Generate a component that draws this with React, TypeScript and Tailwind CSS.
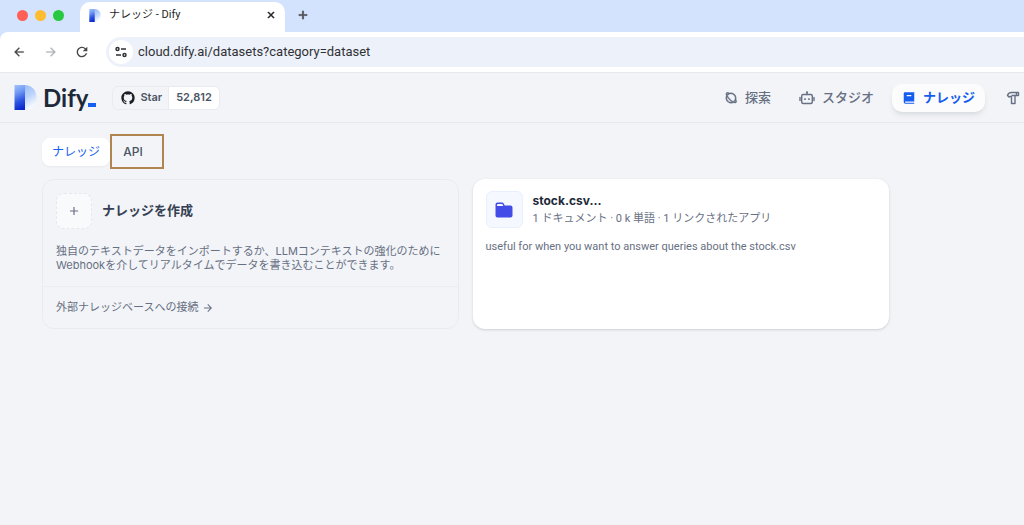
import React, { useId } from 'react';
import clsx from 'clsx';
import {
  RiAddLine,
  RiArrowLeftLine,
  RiArrowRightLine,
  RiBook2Fill,
  RiCloseLine,
  RiGithubFill,
  RiPlanetLine,
} from 'react-icons/ri';
import { MdRefresh } from 'react-icons/md';

interface NavItem {
  label: string;
  icon: React.ReactNode;
  active?: boolean;
}

function DifyMark({ className }: { className?: string }) {
  const id = useId();
  return (
    <svg viewBox="0 0 22 25" className={className} aria-hidden="true">
      <defs>
        <linearGradient id={`${id}a`} x1="0.3" y1="0" x2="0.5" y2="1">
          <stop offset="0" stopColor="#9bbcf9" />
          <stop offset="0.3" stopColor="#6f98f3" />
          <stop offset="0.65" stopColor="#2f56e2" />
          <stop offset="1" stopColor="#0a27cc" />
        </linearGradient>
        <linearGradient id={`${id}b`} x1="0" y1="0" x2="0.3" y2="1">
          <stop offset="0" stopColor="#9bbcf9" />
          <stop offset="0.5" stopColor="#bcd4fb" />
          <stop offset="1" stopColor="#fafcff" />
        </linearGradient>
      </defs>
      <path d="M10 0c7.200 0 12 5 12 12.500S17.200 25 10 25z" fill={`url(#${id}b)`} />
      <path d="M0 0h10.500v25H0z" fill={`url(#${id}a)`} />
    </svg>
  );
}

function TuneIcon() {
  return (
    <svg viewBox="0 0 14 14" className="size-3.5" fill="none" stroke="#303134" strokeWidth="1.500">
      <circle cx="3.500" cy="4" r="1.500" />
      <path d="M7 4h5M2 10h5" />
      <circle cx="10.500" cy="10" r="1.500" />
    </svg>
  );
}

function RobotIcon() {
  return (
    <svg viewBox="0 0 16 16" className="size-4" fill="none" stroke="currentColor" strokeWidth="1.400">
      <rect x="2.700" y="4.500" width="10.600" height="9" rx="1.500" />
      <path d="M8 4.500V2.500M1 7.500v3M15 7.500v3" strokeLinecap="round" />
      <circle cx="8" cy="2.200" r="1" fill="currentColor" stroke="none" />
      <path d="M6 8.200v1.700M10 8.200v1.700" strokeWidth="1.600" />
    </svg>
  );
}

function HammerIcon() {
  return (
    <svg
      viewBox="0 0 14 14"
      className="size-3.5"
      fill="none"
      stroke="currentColor"
      strokeWidth="1.400"
      strokeLinejoin="round"
    >
      <path d="M1.500 4.500C2 2.500 3.300 1.500 5.500 1.500h7v3h-3.500v8H5.500v-7H4L3 6z" />
      <path d="M5.500 4.500H9M10.500 1.500v3" />
    </svg>
  );
}

function FolderIcon() {
  return (
    <svg viewBox="0 0 18 16" className="h-4 w-[18px]" aria-hidden="true">
      <path
        d="M.5 2.500A2 2 0 0 1 2.500.5h4.600c.7 0 1.300.3 1.600.9l1 2.100h5.800a2 2 0 0 1 2 2v8a2 2 0 0 1-2 2h-13a2 2 0 0 1-2-2z"
        fill="#444ce7"
      />
      <path d="M2 4V2.600c0-.4.300-.7.700-.7h4.100c.3 0 .5.100.7.400L8.300 4z" fill="#f5f8ff" />
    </svg>
  );
}

const navItems: NavItem[] = [
  { label: '探索', icon: <RiPlanetLine className="size-3.5" strokeWidth="0.5" /> },
  { label: 'スタジオ', icon: <RobotIcon /> },
  { label: 'ナレッジ', icon: <RiBook2Fill className="size-3.5" />, active: true },
];

function TabStrip() {
  return (
    <div className="flex h-8 bg-[#d3e3fd] pt-0.5">
      <div className="flex w-20 shrink-0 items-center justify-end gap-[7px] pr-4 pb-1">
        <span className="size-[11px] rounded-full bg-[#ff5f57]" />
        <span className="size-[11px] rounded-full bg-[#febc2e]" />
        <span className="size-[11px] rounded-full bg-[#28c840]" />
      </div>
      <div className="flex w-[205px] items-center rounded-t-[10px] bg-white pr-2 pb-1 pl-[9px]">
        <DifyMark className="h-[13px] w-3" />
        <span className="ml-2 font-['Roboto','Noto_Sans_CJK_JP',sans-serif] text-[11px] text-[#1f1f1f]">
          ナレッジ - Dify
        </span>
        <button aria-label="Close tab" className="ml-auto text-[#1f1f1f]">
          <RiCloseLine className="size-3" strokeWidth="1" />
        </button>
      </div>
      <button aria-label="New tab" className="ml-[11px] pb-1 text-[#474747]">
        <RiAddLine className="size-3.5" strokeWidth="1" />
      </button>
    </div>
  );
}

function Toolbar() {
  return (
    <div className="bg-[#d3e3fd]">
      <div className="flex h-10 items-center rounded-tl-lg bg-white pl-3">
        <button aria-label="Back" className="text-[#474747]">
          <RiArrowLeftLine className="size-3.5" strokeWidth="0.5" />
        </button>
        <button aria-label="Forward" className="ml-[18px] text-[#b0b3b8]">
          <RiArrowRightLine className="size-3.5" strokeWidth="0.5" />
        </button>
        <button aria-label="Reload" className="ml-4 text-[#474747]">
          <MdRefresh className="size-4" />
        </button>
        <div className="ml-4 flex h-[30px] flex-1 items-center rounded-l-full bg-[#edf1fa] pl-[3px]">
          <button
            aria-label="Site information"
            className="flex size-6 items-center justify-center rounded-full bg-white"
          >
            <TuneIcon />
          </button>
          <input
            aria-label="Address"
            readOnly
            value="cloud.dify.ai/datasets?category=dataset"
            className="ml-[5px] flex-1 bg-transparent font-['Roboto',sans-serif] text-[13px] text-[#303134] outline-none"
          />
        </div>
      </div>
    </div>
  );
}

function Header() {
  return (
    <header className="flex h-[51px] items-center border-y border-[#e6e8ed] pl-3.5">
      <a href="#" aria-label="Dify" className="flex items-center">
        <DifyMark className="h-[25px] w-[23px]" />
        <span className="ml-1.5 flex items-end font-['Lato'] text-[24px] leading-6 font-bold text-[#1d2939]">
          Dify
          <span className="mb-[3px] h-1 w-2 bg-[#155eef]" />
        </span>
      </a>
      <a
        href="#"
        className="ml-4 flex h-6 overflow-hidden rounded-md border border-[#e9ebf0] text-[11px] font-semibold text-[#495464]"
      >
        <span className="flex items-center gap-1 pr-1.5 pl-[7px]">
          <RiGithubFill className="size-4 text-[#1b1f24]" />
          Star
        </span>
        <span className="flex items-center border-l border-[#e9ebf0] bg-white px-[7px]">52,812</span>
      </a>
      <nav className="ml-auto flex items-center gap-2">
        {navItems.map((item) => (
          <a
            key={item.label}
            href="#"
            className={clsx(
              'flex h-7 items-center gap-[7px] rounded-[10px] px-2.5 text-[13px]',
              item.active
                ? 'bg-[#fcfcfd] font-bold text-[#155eef] shadow-md shadow-[#10182814]'
                : 'font-medium text-[#676f83]'
            )}
          >
            {item.icon}
            {item.label}
          </a>
        ))}
        <a href="#" aria-label="ツール" className="pr-1 pl-[13px] text-[#676f83]">
          <HammerIcon />
        </a>
      </nav>
    </header>
  );
}

function CreateCard() {
  return (
    <article className="flex flex-col rounded-xl border border-[#e9ebf0]">
      <div className="flex h-[106px] flex-col px-[13px] pt-[13px]">
        <a href="#" className="flex items-center gap-2.5 text-[13px] font-bold text-[#354052]">
          <span className="flex size-9 items-center justify-center rounded-lg border border-dashed border-[#e4e7ec] bg-[#f9fafb]">
            <RiAddLine className="size-3.5 text-[#676f83]" />
          </span>
          ナレッジを作成
        </a>
        <p className="mt-[15px] text-[11px] leading-3.5 text-[#676f83]">
          独自のテキストデータをインポートするか、LLMコンテキストの強化のために
          <br />
          Webhookを介してリアルタイムでデータを書き込むことができます。
        </p>
      </div>
      <a
        href="#"
        className="flex flex-1 items-center gap-1 border-t border-[#ebedf1] px-[13px] text-[11px] text-[#676f83]"
      >
        外部ナレッジベースへの接続
        <RiArrowRightLine className="size-3" />
      </a>
    </article>
  );
}

function DatasetCard() {
  return (
    <article className="rounded-xl bg-white px-[13px] pt-3 font-['Roboto','Noto_Sans_CJK_JP',sans-serif] shadow-sm shadow-[#10182820]">
      <div className="flex items-center gap-2.5">
        <span className="flex size-[37px] items-center justify-center rounded-md border border-[#e8effd] bg-[#f5f8ff]">
          <FolderIcon />
        </span>
        <div>
          <h2 className="font-['Inter'] text-[12px] leading-[18px] font-bold text-[#1d2939]">stock.csv...</h2>
          <p className="text-[11px] leading-[18px] text-[#676f83]">1 ドキュメント · 0 k 単語 · 1 リンクされたアプリ</p>
        </div>
      </div>
      <p className="mt-2.5 text-[11px] leading-[18px] text-[#676f83]">
        useful for when you want to answer queries about the stock.csv
      </p>
    </article>
  );
}

export default function App() {
  return (
    <div className="min-h-screen bg-[#f2f4f7] font-['Inter','Noto_Sans_CJK_JP',sans-serif]">
      <TabStrip />
      <Toolbar />
      <Header />
      <main className="px-[42px] pt-[11px]">
        <div className="flex items-center text-[12px]">
          <button className="h-7 rounded-lg bg-white px-2.5 text-[#155eef] shadow-xs">ナレッジ</button>
          <button className="h-[35px] w-[54px] border-2 border-[#b08550] pr-2 font-medium text-[#495464]">API</button>
        </div>
        <div className="mt-2.5 grid max-w-[847px] auto-rows-[150px] grid-cols-2 gap-3.5">
          <CreateCard />
          <DatasetCard />
        </div>
      </main>
    </div>
  );
}
